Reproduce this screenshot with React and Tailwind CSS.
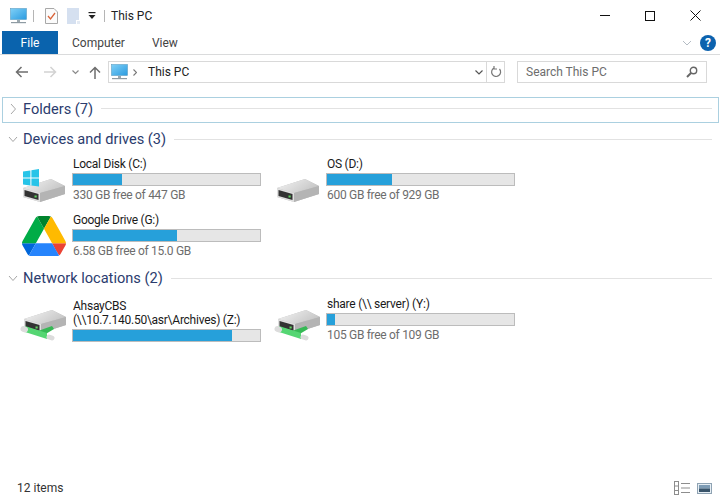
import React from 'react';

const drives = [
  [
    { name: ['Local Disk (C:)'], free: '330 GB free of 447 GB', pct: 26.2, icon: 'windows' },
    { name: ['OS (D:)'], free: '600 GB free of 929 GB', pct: 34.7, icon: 'disk' },
    { name: ['Google Drive (G:)'], free: '6.58 GB free of 15.0 GB', pct: 55.5, icon: 'gdrive' },
  ],
  [
    { name: ['AhsayCBS', '(\\\\10.7.140.50\\asr\\Archives) (Z:)'], pct: 84.8, icon: 'network' },
    { name: ['share (\\\\ server) (Y:)'], free: '105 GB free of 109 GB', pct: 4.1, icon: 'network' },
  ],
];

const Monitor = ({ className }) => (
  <svg viewBox="0 0 17 16" className={className}>
    <defs>
      <linearGradient id="scr" x1="0" y1="0" x2="1" y2="1">
        <stop offset="0" stopColor="#7fd0f7" />
        <stop offset="1" stopColor="#2a9be0" />
      </linearGradient>
    </defs>
    <rect x="0.5" y="0.5" width="16" height="11" fill="url(#scr)" stroke="#5d9fc4" strokeWidth="0.6" />
    <rect x="7" y="12" width="3" height="2" fill="#9aa7ae" />
    <rect x="1" y="14" width="15" height="1.2" fill="#8e9ba3" />
  </svg>
);

const DiskShape = ({ ox, oy, id }) => (
  <g transform={`translate(${ox} ${oy})`}>
    <defs>
      <linearGradient id={id} x1="0" y1="0" x2="1" y2="0.5">
        <stop offset="0" stopColor="#f5f5f5" />
        <stop offset="1" stopColor="#c6c6c6" />
      </linearGradient>
    </defs>
    <polygon points="0,9 28,0 42,7 42,15 17,23 0,18" fill="#bdbdbd" />
    <polygon points="0,9 28,0 42,7 17,14" fill={`url(#${id})`} />
    <polygon points="17,14 42,7 42,15 17,23" fill="#b4b4b4" />
    <polygon points="0,9 17,14 17,23 0,18" fill="#e0e0e0" />
    <polygon points="1.5,11 15.5,15 15.5,21 1.5,17" fill="#333" />
    <rect x="11.5" y="16.5" width="2.2" height="2" fill="#5fd35f" />
  </g>
);

const DriveIcon = ({ type, id }) => (
  <svg viewBox="0 0 46 48" className="h-12 w-[46px] shrink-0">
    {type === 'gdrive' && (
      <g transform="translate(2 4) scale(0.504 0.513)">
        <path d="m6.6 66.85 3.85 6.65c.8 1.4 1.95 2.5 3.3 3.3l13.75-23.8h-27.5c0 1.55.4 3.1 1.2 4.5z" fill="#0066da" />
        <path d="m43.65 25-13.75-23.8c-1.35.8-2.5 1.9-3.3 3.3l-25.4 44a9.06 9.06 0 0 0 -1.2 4.5h27.5z" fill="#00ac47" />
        <path d="m73.55 76.8c1.35-.8 2.5-1.9 3.3-3.3l1.6-2.75 7.65-13.25c.8-1.4 1.2-2.95 1.2-4.5h-27.502l5.852 11.5z" fill="#ea4335" />
        <path d="m43.65 25 13.75-23.8c-1.35-.8-2.9-1.2-4.5-1.2h-18.5c-1.6 0-3.15.45-4.5 1.2z" fill="#00832d" />
        <path d="m59.8 53h-32.3l-13.75 23.8c1.35.8 2.9 1.2 4.5 1.2h50.8c1.6 0 3.15-.45 4.5-1.2z" fill="#2684fc" />
        <path d="m73.4 26.5-12.7-22c-.8-1.4-1.95-2.5-3.3-3.3l-13.75 23.8 16.15 28h27.45c0-1.55-.4-3.1-1.2-4.5z" fill="#ffba00" />
      </g>
    )}
    {(type === 'disk' || type === 'windows') && <DiskShape ox={3} oy={23} id={id} />}
    {type === 'windows' && (
      <g fill="#27c4e8">
        <polygon points="3,15.5 10.4,14.4 10.4,21.4 3,21.4" />
        <polygon points="11.4,14.2 19,13 19,21.4 11.4,21.4" />
        <polygon points="3,22.4 10.4,22.4 10.4,29.4 3,28.4" />
        <polygon points="11.4,22.4 19,22.4 19,30.6 11.4,29.6" />
      </g>
    )}
    {type === 'network' && (
      <g>
        <DiskShape ox={4} oy={14} id={id} />
        <polygon points="18,35 32,30 34,33 24,39" fill="#36b955" />
        <polygon points="5,30 27,37 27,43 5,36" fill="#55d673" />
        <path d="M3.5 33 L5 33.5" stroke="#dcdcdc" strokeWidth="6" strokeLinecap="round" />
        <path d="M29 41 L32 42" stroke="#dcdcdc" strokeWidth="5" strokeLinecap="round" />
      </g>
    )}
  </svg>
);

const Tile = ({ d, id }) => (
  <div className="flex h-12 w-[254px] items-center pl-5">
    <DriveIcon type={d.icon} id={id} />
    <div className="ml-[6px] w-[189px] shrink-0">
      {d.name.map((n) => (
        <div key={n} className="whitespace-nowrap pl-px text-[12px] leading-[14px] tracking-[-0.25px] text-[#1a1a1a]">{n}</div>
      ))}
      <div className="mt-[2px] h-[13px] border border-[#bcbcbc] bg-[#e6e6e6]">
        <div className="h-full bg-[#26a0da]" style={{ width: `${d.pct}%` }}></div>
      </div>
      {d.free && <div className="mt-[2px] pl-px text-[12px] leading-[15px] tracking-[-0.3px] text-[#6d6d6d]">{d.free}</div>}
    </div>
  </div>
);

const Chevron = ({ open }) => (
  <svg viewBox="0 0 10 10" className="h-[10px] w-[10px] shrink-0 text-[#a6a6a6]" fill="none" stroke="currentColor">
    {open ? <path d="M1 3 L5 7.5 L9 3" /> : <path d="M3 0 L7.5 5 L3 10" />}
  </svg>
);

const SectionHeader = ({ title, open }) => (
  <div className="flex h-5 items-center pl-[8px] pr-2">
    <Chevron open={open} />
    <span className="ml-[5px] text-[14.6px] leading-5 text-[#2b3c6e]">{title}</span>
    <div className="ml-[8px] h-px flex-1 bg-[#e2e2e2]"></div>
  </div>
);

export default function App() {
  return (
    <div className="flex h-[500px] w-[720px] flex-col overflow-hidden bg-white font-['Roboto',sans-serif] text-[12px] text-[#1a1a1a]">
      {/* Title bar */}
      <div className="flex h-[31px] shrink-0 items-center">
        <Monitor className="ml-[10px] h-[16px] w-[17px]" />
        <div className="ml-[6px] h-[12px] w-px bg-[#b5b5b5]"></div>
        <svg viewBox="0 0 13 16" className="ml-[11px] h-4 w-[13px]">
          <path d="M0.5 0.5 H9 L12.5 4 V15.5 H0.5 Z" fill="#fbfbfb" stroke="#a8a8a8" />
          <path d="M3 8 L5.5 11 L10 5" fill="none" stroke="#d9643a" strokeWidth="1.3" />
        </svg>
        <svg viewBox="0 0 13 16" className="ml-[9px] h-4 w-[13px]">
          <path d="M0 0 H12 V12 H9 V16 H0 Z" fill="#d5e0f0" />
          <path d="M10 13 H13 V16 H10 Z" fill="#e4eaf3" />
        </svg>
        <svg viewBox="0 0 8 8" className="ml-[8px] h-2 w-2">
          <rect x="0.5" y="0" width="7" height="1.2" fill="#222" />
          <polygon points="0.5,3 7.5,3 4,7" fill="#222" />
        </svg>
        <div className="ml-2 h-[12px] w-px bg-[#b5b5b5]"></div>
        <span className="ml-[6px] text-[12px] text-[#222]">This PC</span>
        <div className="ml-auto flex items-center pr-[19px]">
          <div className="h-px w-[10px] bg-[#111]"></div>
          <div className="ml-[35px] h-[10px] w-[10px] border border-[#111]"></div>
          <svg viewBox="0 0 11 11" className="ml-[35px] h-[11px] w-[11px]" stroke="#111" fill="none">
            <path d="M0.5 0.5 L10.5 10.5 M10.5 0.5 L0.5 10.5" />
          </svg>
        </div>
      </div>

      {/* Ribbon tabs */}
      <div className="flex h-6 shrink-0 items-stretch border-b border-[#dadbdc] pl-[2px]">
        <div className="flex w-14 items-center justify-center bg-[#0a63ad] text-white">File</div>
        <div className="ml-[14px] flex items-center text-[#444]">Computer</div>
        <div className="ml-[27px] flex items-center text-[#444]">View</div>
        <div className="ml-auto flex items-center pr-[4px]">
          <svg viewBox="0 0 10 6" className="h-[6px] w-[10px]" fill="none" stroke="#b4bcc4">
            <path d="M1 1 L5 5 L9 1" />
          </svg>
          <div className="ml-[8px] flex h-4 w-4 items-center justify-center rounded-full bg-[#0c62ae] text-[12px] font-bold leading-none text-white">?</div>
        </div>
      </div>

      {/* Nav row */}
      <div className="flex h-[42px] shrink-0 items-start pt-[6px]">
        <div className="flex h-[22px] items-center">
          <svg viewBox="0 0 13 12" className="ml-[15px] h-3 w-[13px]" fill="none" stroke="#6e6e6e" strokeWidth="1.5">
            <path d="M13 6 H1.5 M6.5 1 L1.5 6 L6.5 11" />
          </svg>
          <svg viewBox="0 0 13 12" className="ml-4 h-3 w-[13px]" fill="none" stroke="#d2d2d2" strokeWidth="1.5">
            <path d="M0 6 H11.5 M6.5 1 L11.5 6 L6.5 11" />
          </svg>
          <svg viewBox="0 0 7 5" className="ml-[15px] h-[5px] w-[7px]" fill="none" stroke="#8a8a8a" strokeWidth="1.2">
            <path d="M0.5 0.5 L3.5 3.5 L6.5 0.5" />
          </svg>
          <svg viewBox="0 0 12 13" className="ml-[10px] h-[13px] w-3" fill="none" stroke="#6e6e6e" strokeWidth="1.5">
            <path d="M6 13 V1.5 M1 6.5 L6 1.5 L11 6.5" />
          </svg>
        </div>
        <div className="ml-[7px] flex h-[22px] w-[397px] items-center border border-[#d9d9d9]">
          <Monitor className="ml-[2px] h-[16px] w-[17px]" />
          <svg viewBox="0 0 4 7" className="ml-[5px] h-[7px] w-1" fill="none" stroke="#777" strokeWidth="1.1">
            <path d="M0.5 0.5 L3.5 3.5 L0.5 6.5" />
          </svg>
          <span className="ml-[11px] text-[#222]">This PC</span>
          <svg viewBox="0 0 8 5" className="ml-auto h-[5px] w-2" fill="none" stroke="#555" strokeWidth="1.2">
            <path d="M0.5 0.5 L4 4 L7.5 0.5" />
          </svg>
          <div className="ml-[3px] flex h-full w-[18px] items-center justify-center border-l border-[#d9d9d9]">
            <svg viewBox="0 0 12 12" className="h-3 w-3" fill="none" stroke="#777" strokeWidth="1.2">
              <path d="M9.5 3 A4.5 4.5 0 1 1 4 2 M4 0 V3 H7" />
            </svg>
          </div>
        </div>
        <div className="ml-[12px] flex h-[22px] w-[190px] items-center border border-[#d9d9d9] pl-2 pr-[8px]">
          <span className="text-[#6d6d6d]">Search This PC</span>
          <svg viewBox="0 0 12 12" className="ml-auto h-3 w-3" fill="none" stroke="#666" strokeWidth="1.4">
            <circle cx="7.5" cy="4.5" r="3.2" />
            <path d="M5 7 L1 11" strokeWidth="2" />
          </svg>
        </div>
      </div>

      {/* Content */}
      <div className="ml-[2px] mr-px flex h-[26px] shrink-0 items-center border border-[#abd0e0] pb-[3px] pl-[5px] pr-[6px]">
        <Chevron />
        <span className="ml-[5px] text-[14.6px] leading-5 text-[#2b3c6e]">Folders (7)</span>
        <div className="ml-[8px] h-px flex-1 bg-[#e2e2e2]"></div>
      </div>

      <div className="mt-[6px]">
        <SectionHeader title="Devices and drives (3)" open />
      </div>
      <div className="mt-[7px] grid grid-cols-[254px_254px] gap-y-2">
        {drives[0].map((d, i) => (
          <Tile key={i} d={d} id={`a${i}`} />
        ))}
      </div>

      <div className="mt-2">
        <SectionHeader title="Network locations (2)" open />
      </div>
      <div className="mt-2 grid grid-cols-[254px_254px]">
        {drives[1].map((d, i) => (
          <Tile key={i} d={d} id={`b${i}`} />
        ))}
      </div>

      {/* Status bar */}
      <div className="mt-auto flex h-6 shrink-0 items-center pl-[17px] pr-2 text-[#333]">
        <span>12 items</span>
        <svg viewBox="0 0 17 14" className="ml-auto h-[14px] w-[17px]" fill="none" stroke="#8d8d8d">
          <rect x="0.5" y="0.5" width="4" height="13" />
          <path d="M0.5 5 H4.5 M0.5 9.5 H4.5 M7 2.5 H16 M7 7 H16 M7 11.5 H16" />
        </svg>
        <svg viewBox="0 0 15 11" className="ml-[6px] h-[11px] w-[15px]">
          <rect x="0.5" y="0.5" width="14" height="10" fill="#e6eef4" stroke="#8fa3b3" />
          <rect x="2" y="2" width="11" height="3.5" fill="#7e9cb5" />
          <rect x="2" y="5.5" width="11" height="3.5" fill="#39546a" />
        </svg>
      </div>
    </div>
  );
}
